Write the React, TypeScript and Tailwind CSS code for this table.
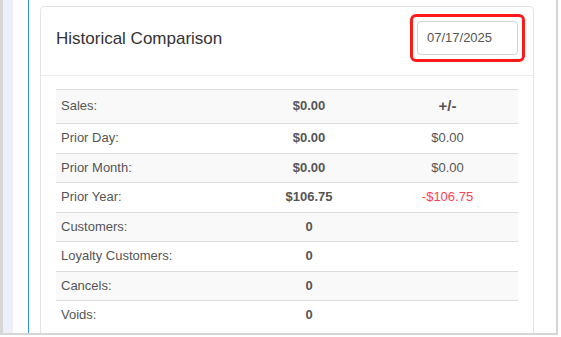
import React from "react";

// Rows of the comparison table
const rows = [
  { label: "Prior Day:", value: "$0.00", diff: "$0.00", neg: false },
  { label: "Prior Month:", value: "$0.00", diff: "$0.00", neg: false },
  { label: "Prior Year:", value: "$106.75", diff: "-$106.75", neg: true },
  { label: "Customers:", value: "0", diff: "", neg: false },
  { label: "Loyalty Customers:", value: "0", diff: "", neg: false },
  { label: "Cancels:", value: "0", diff: "", neg: false },
  { label: "Voids:", value: "0", diff: "", neg: false },
];

const App = () => {
  return (
    <div
      className="w-[561px] h-[337px] bg-white overflow-hidden"
      style={{ fontFamily: '"Liberation Sans", Arial, sans-serif' }}
    >
      <div className="w-[558px] h-[335px] flex border-l-[3px] border-r-2 border-b-2 border-[#d6d6d6] overflow-hidden">
        {/* side stripe */}
        <div className="w-[10px] shrink-0 bg-[#edf0f8]"></div>
        <div className="w-[15px] shrink-0"></div>
        <div className="w-px shrink-0 bg-[#2e95f5]"></div>

        <div className="flex-1 pl-[11px]">
          <div className="mt-[6px] w-[494px] h-[400px] border border-[#e4e4e4] rounded-[4px] bg-white">
            {/* header */}
            <div className="h-[69px] flex items-start justify-between pl-[15px] pr-[8px] pt-[7px] border-b border-[#ececec]">
              <h3 className="mt-[15px] text-[17px] leading-[20px] text-[#333]">
                Historical Comparison
              </h3>
              <div className="border-[3px] border-[#ff1a1a] rounded-[6px] p-[4px]">
                <div className="w-[101px] h-[34px] border border-[#d2d2d2] rounded-[4px] flex items-center pl-[9px] text-[13px] text-[#555]">
                  07/17/2025
                </div>
              </div>
            </div>

            {/* table */}
            <div className="mx-[15px] mt-[13px] text-[13px] text-[#555]">
              <div className="grid grid-cols-[184px_138px_139px] h-[34px] items-center border-t border-[#dcdcdc] bg-[#f9f9f9] leading-[18.57px]">
                <div className="px-[5px]">Sales:</div>
                <div className="text-center font-bold">$0.00</div>
                <div className="text-center font-bold text-[15px]">+/-</div>
              </div>
              {rows.map((row, i) => (
                <div
                  key={row.label}
                  className={
                    "grid grid-cols-[184px_138px_139px] border-t border-[#dcdcdc] leading-[18.57px] " +
                    (i % 2 === 1 ? "bg-[#f9f9f9]" : "bg-white")
                  }
                >
                  <div className="px-[5px] py-[5px]">{row.label}</div>
                  <div className="py-[5px] text-center font-bold">{row.value}</div>
                  <div className={"py-[5px] text-center " + (row.neg ? "text-[#ff3d55]" : "")}>
                    {row.diff}
                  </div>
                </div>
              ))}
            </div>
          </div>
        </div>
      </div>
    </div>
  );
};

export default App;
